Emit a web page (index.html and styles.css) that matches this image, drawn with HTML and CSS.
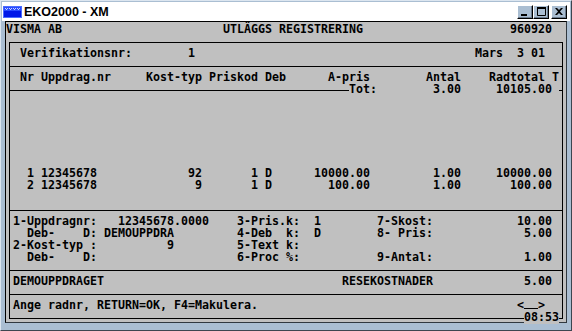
FILE: index.html
```html
<!DOCTYPE html>
<html lang="sv">
<head>
    <meta charset="UTF-8">
    <title>EKO2000 - XM</title>
    <link rel="stylesheet" href="styles.css">
</head>
<body>
<div class="window">
    <div class="titlebar">
        <svg class="app-icon" width="19" height="12" viewBox="0 0 19 12">
            <rect width="19" height="12" fill="#0018e8"/>
            <rect x="0.5" y="0.5" width="18" height="11" fill="none" stroke="#4a6cff"/>
            <rect x="1" y="1" width="17" height="4" fill="#2a4cff"/>
            <g fill="#c8d4ff">
                <rect x="2" y="2" width="1" height="1"/><rect x="4" y="2" width="1" height="1"/>
                <rect x="6" y="2" width="1" height="1"/><rect x="8" y="2" width="1" height="1"/>
                <rect x="10" y="2" width="1" height="1"/><rect x="12" y="2" width="1" height="1"/>
                <rect x="14" y="2" width="1" height="1"/><rect x="16" y="2" width="1" height="1"/>
                <rect x="3" y="3" width="1" height="1"/><rect x="7" y="3" width="1" height="1"/>
                <rect x="11" y="3" width="1" height="1"/><rect x="15" y="3" width="1" height="1"/>
            </g>
        </svg>
        <span class="title">EKO2000 - XM</span>
        <div class="controls">
            <span class="btn"><svg width="8" height="8" viewBox="0 0 8 8"><rect x="0" y="6" width="6" height="2" fill="#000"/></svg></span>
            <span class="btn"><svg width="9" height="9" viewBox="0 0 9 9"><path d="M0.5 1.5h8v7h-8z" fill="none" stroke="#000"/><rect x="0" y="0" width="9" height="2" fill="#000"/></svg></span>
            <span class="btn close"><svg width="8" height="7" viewBox="0 0 8 7"><path d="M0 0h2l2 2 2-2h2l-3 3.5 3 3.5h-2l-2-2-2 2h-2l3-3.5z" fill="#000"/></svg></span>
        </div>
    </div>

    <div class="screen">
        <div class="row">VISMA AB                       UTLÄGGS REGISTRERING                     960920</div>
        <div class="box">
            <div class="sec">
                <div class="row"> Verifikationsnr:        1                                        Mars  3 01</div>
            </div>
            <div class="sec">
                <div class="row"> Nr Uppdrag.nr     Kost-typ Priskod Deb      A-pris        Antal    Radtotal T</div>
            </div>
            <div class="row onrule">                                                <span class="cut">Tot:        3.00     10105.00 </span></div>
            <div class="sec list">
                <div class="row">  1 12345678             92       1 D      10000.00         1.00     10000.00</div>
                <div class="row">  2 12345678              9       1 D        100.00         1.00       100.00</div>
            </div>
            <div class="sec">
                <div class="row">1-Uppdragnr:   12345678.0000    3-Pris.k:  1        7-Skost:            10.00</div>
                <div class="row">  Deb-    D: DEMOUPPDRA         4-Deb  k:  D        8- Pris:             5.00</div>
                <div class="row">2-Kost-typ :          9         5-Text k:</div>
                <div class="row">  Deb-    D:                    6-Proc %:           9-Antal:             1.00</div>
            </div>
            <div class="sec">
                <div class="row">DEMOUPPDRAGET                                  RESEKOSTNADER             5.00</div>
            </div>
            <div class="sec">
                <div class="row">Ange radnr, RETURN=OK, F4=Makulera.                                     &lt;<span class="slot"></span>&gt;</div>
            </div>
        </div>
        <div class="row onrule">                                                                          <span class="cut">08:53</span></div>
    </div>
</div>
</body>
</html>
```

FILE: styles.css
```css
body {
    margin: 0;
    background: #fff;
}
.window {
    box-sizing: border-box;
    width: 572px;
    height: 331px;
    padding: 1px 4px 7px;
    background: #aabed2;
    border: 1px solid;
    border-color: #dce6f0 #3c4650 #3c4650 #dce6f0;
}
.titlebar {
    display: flex;
    align-items: center;
    height: 19px;
    margin: 0 -3px;
    padding: 0 3px 0 1px;
    background: #fff;
    color: #000;
    font: bold 12.5px "Liberation Sans", Arial, sans-serif;
}
.app-icon {
    margin-right: 2px;
}
.controls {
    display: flex;
    margin-left: auto;
}
.btn {
    box-sizing: border-box;
    display: flex;
    align-items: center;
    justify-content: center;
    width: 16px;
    height: 14px;
    background: #aabed2;
    border: 1px solid;
    border-color: #fff #000 #000 #fff;
    box-shadow: inset -1px -1px #6c7c8e;
}
.btn.close {
    margin-left: 2px;
}
.screen {
    height: 300px;
    background: #c0c0c0;
    border: 1px solid;
    border-color: #000 #30383f #30383f #000;
    color: #000;
    font: bold 11.63px "DejaVu Sans Mono", monospace;
}
.row {
    box-sizing: border-box;
    height: 12px;
    padding-top: 1px;
    line-height: 12px;
    white-space: pre;
}
.box {
    margin: 8px 3px 0;
    border: 1px solid #000;
    border-bottom: 0;
}
.box .row {
    padding-left: 3px;
}
.sec {
    padding: 3px 0 8px;
    border-bottom: 1px solid #000;
}
.sec.list {
    padding: 72px 0 20px;
}
.onrule {
    margin-top: -9px;
}
.cut {
    background: #c0c0c0;
}
.slot {
    display: inline-block;
    width: 14px;
    height: 9px;
    border-bottom: 1px solid #000;
    vertical-align: top;
}
```
